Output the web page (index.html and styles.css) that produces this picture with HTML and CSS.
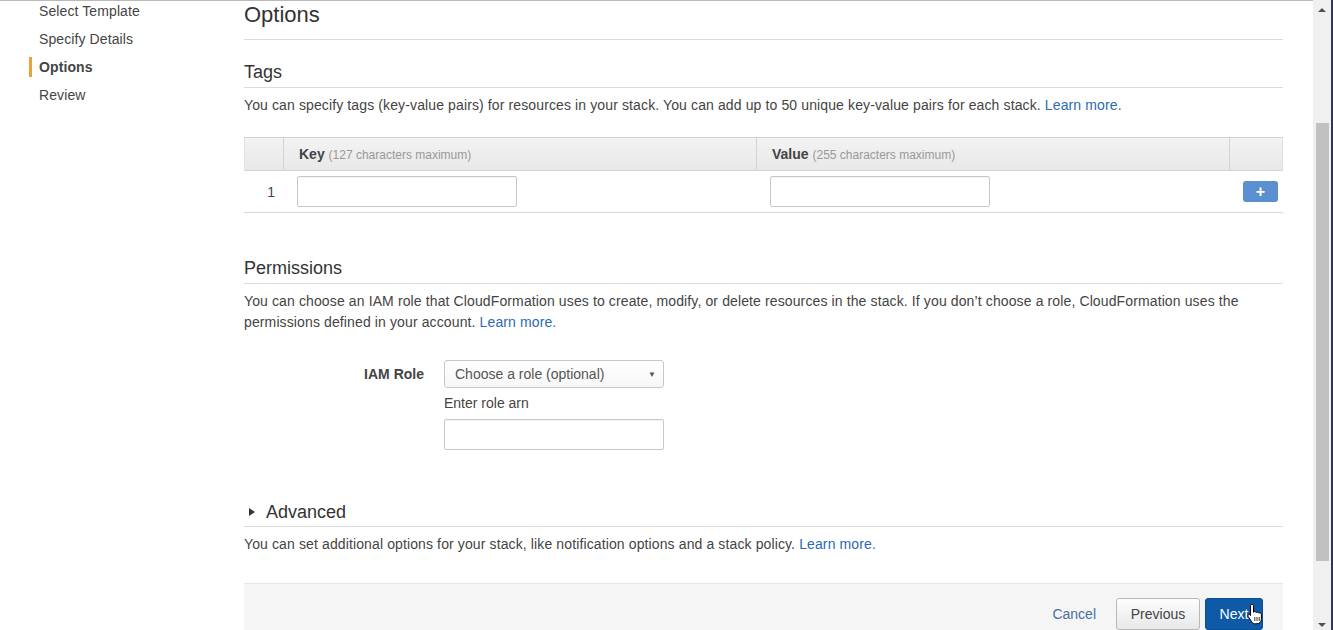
FILE: index.html
```html
<!DOCTYPE html>
<html>
<head>
<meta charset="utf-8">
<link rel="stylesheet" href="styles.css">
</head>
<body>
<div class="window">
  <div class="page">
    <nav class="steps">
      <div class="step">Select Template</div>
      <div class="step">Specify Details</div>
      <div class="step active">Options</div>
      <div class="step">Review</div>
    </nav>
    <main class="main">
      <h1 class="title">Options</h1>

      <h2 class="section">Tags</h2>
      <p class="desc">You can specify tags (key-value pairs) for resources in your stack. You can add up to 50 unique key-value pairs for each stack. <a class="link">Learn more.</a></p>

      <div class="tags">
        <div class="thead">
          <div class="th idx"></div>
          <div class="th col"><b>Key</b> <span class="hint">(127 characters maximum)</span></div>
          <div class="th col"><b>Value</b> <span class="hint">(255 characters maximum)</span></div>
          <div class="th act"></div>
        </div>
        <div class="trow">
          <div class="td idx">1</div>
          <div class="td col"><div class="input"></div></div>
          <div class="td col"><div class="input"></div></div>
          <div class="td act"><div class="plus">+</div></div>
        </div>
      </div>

      <h2 class="section perm">Permissions</h2>
      <p class="desc">You can choose an IAM role that CloudFormation uses to create, modify, or delete resources in the stack. If you don’t choose a role, CloudFormation uses the permissions defined in your account. <a class="link">Learn more.</a></p>

      <div class="roleform">
        <label class="rlabel">IAM Role</label>
        <div class="rfields">
          <div class="select"><span>Choose a role (optional)</span><span class="caret">▼</span></div>
          <div class="arnlabel">Enter role arn</div>
          <div class="input arn"></div>
        </div>
      </div>

      <h2 class="section adv"><span class="tri"></span>Advanced</h2>
      <p class="desc">You can set additional options for your stack, like notification options and a stack policy. <a class="link">Learn more.</a></p>

      <div class="footer">
        <a class="cancel">Cancel</a>
        <button class="btn prev">Previous</button>
        <div class="nextwrap">
          <button class="btn next">Next</button>
          <svg class="cursor" width="16" height="22" viewBox="0 0 16 22">
            <path d="M5 1.5c0.9 0 1.5 0.6 1.5 1.5v6.2c0.3-0.4 0.8-0.6 1.3-0.6 0.7 0 1.2 0.4 1.4 1 0.3-0.3 0.7-0.5 1.2-0.5 0.7 0 1.2 0.4 1.4 1 0.3-0.2 0.6-0.3 1-0.3 0.9 0 1.6 0.7 1.6 1.6v4.8c0 2.6-1.8 4.6-4.4 4.6H8.3c-1.5 0-2.7-0.7-3.5-1.9L1.2 13.6c-0.4-0.7-0.2-1.5 0.4-1.9 0.6-0.4 1.4-0.3 1.9 0.3L3.5 12.5V3c0-0.9 0.6-1.5 1.5-1.5z" fill="#fff" stroke="#000" stroke-width="1"/>
            <path d="M7.8 14v4M10 14v4M12.2 14v4" stroke="#000" stroke-width="0.8"/>
          </svg>
        </div>
      </div>
    </main>
    <div class="rspace"></div>
  </div>
  <div class="scrollbar">
    <div class="track">
      <div class="arrow up"></div>
      <div class="thumb"></div>
      <div class="arrow down"></div>
    </div>
    <div class="edge"></div>
  </div>
</div>
</body>
</html>
```

FILE: styles.css
```css
html, body {
  margin: 0;
  padding: 0;
  height: 630px;
  overflow: hidden;
  background: #fff;
}
body {
  font-family: "Liberation Sans", Arial, sans-serif;
  font-size: 14px;
  color: #444;
}
.window {
  display: flex;
  height: 630px;
}
.page {
  flex: 1;
  display: flex;
  border-top: 1px solid #b9b9b9;
  min-width: 0;
}
.steps {
  width: 215px;
  padding-left: 29px;
  flex: none;
}
.step {
  line-height: 20px;
  height: 20px;
  margin-bottom: 8px;
  padding-left: 7px;
  border-left: 3px solid transparent;
  color: #444;
  letter-spacing: 0.1px;
}
.step.active {
  border-left-color: #e8a33d;
  font-weight: bold;
}
.main {
  width: 1039px;
  flex: none;
}
.rspace {
  flex: 1;
}
.title {
  margin: 0;
  font-size: 22px;
  font-weight: normal;
  color: #333;
  line-height: 27px;
  padding-bottom: 11px;
  border-bottom: 1px solid #ddd;
}
.section {
  margin: 20px 0 0;
  font-size: 18px;
  font-weight: normal;
  color: #333;
  line-height: 24px;
  padding-bottom: 3px;
  border-bottom: 1px solid #ddd;
}
.desc {
  margin: 7px 0 0;
  line-height: 21px;
  letter-spacing: 0.12px;
}
.link {
  color: #2b6bb2;
}
.tags {
  margin-top: 21px;
}
.thead, .trow {
  display: grid;
  grid-template-columns: 39px 473px 473px 54px;
}
.thead {
  height: 32px;
  background: linear-gradient(#f3f3f3, #e8e8e8);
  border-top: 1px solid #d3d3d3;
  border-bottom: 1px solid #d3d3d3;
}
.th {
  line-height: 32px;
  padding-left: 15px;
  border-left: 1px solid #d3d3d3;
  color: #444;
}
.th.idx {
  border-left: 1px solid #e0e0e0;
}
.th.act {
  border-right: 1px solid #e0e0e0;
}
.hint {
  font-size: 12px;
  color: #999;
}
.trow {
  height: 41px;
  border-bottom: 1px solid #d6d6d6;
  align-items: center;
}
.td.idx {
  text-align: right;
  padding-right: 8px;
}
.td.col {
  padding-left: 14px;
}
.input {
  width: 218px;
  height: 29px;
  border: 1px solid #c8c8c8;
  border-radius: 2px;
  background: #fff;
  box-shadow: inset 0 1px 1px rgba(0,0,0,0.05);
}
.td.act {
  display: flex;
  justify-content: flex-end;
  padding-right: 5px;
}
.plus {
  width: 35px;
  height: 21px;
  background: #5a8fd0;
  border-radius: 3px;
  color: #fff;
  font-weight: bold;
  font-size: 16px;
  line-height: 21px;
  text-align: center;
}
.section.perm {
  margin-top: 43px;
}
.roleform {
  display: grid;
  grid-template-columns: 180px 220px;
  column-gap: 20px;
  margin-top: 27px;
}
.rlabel {
  text-align: right;
  font-weight: bold;
  line-height: 28px;
}
.select {
  height: 26px;
  border: 1px solid #c8c8c8;
  border-radius: 3px;
  background: linear-gradient(#fff, #f7f7f7);
  display: flex;
  justify-content: space-between;
  align-items: center;
  padding: 0 7px 0 10px;
  color: #555;
}
.caret {
  font-size: 8px;
  color: #555;
}
.arnlabel {
  line-height: 21px;
  margin-top: 5px;
}
.input.arn {
  width: 218px;
  height: 29px;
  margin-top: 5px;
}
.section.adv {
  margin-top: 50px;
  padding-bottom: 2px;
  display: flex;
  align-items: center;
}
.tri {
  width: 0;
  height: 0;
  border-top: 4px solid transparent;
  border-bottom: 4px solid transparent;
  border-left: 6px solid #333;
  margin: 0 11px 0 5px;
}
.footer {
  margin-top: 28px;
  background: #f5f5f5;
  border-top: 1px solid #e6e6e6;
  display: flex;
  justify-content: flex-end;
  padding: 14px 20px 0 0;
  height: 60px;
  align-items: flex-start;
}
.cancel {
  color: #44709e;
  line-height: 32px;
  margin-right: 20px;
}
.btn {
  font-family: "Liberation Sans", Arial, sans-serif;
  font-size: 14px;
  height: 32px;
  border-radius: 3px;
  padding: 0;
}
.prev {
  width: 84px;
  background: linear-gradient(#fdfdfd, #e8e8e8);
  border: 1px solid #b8b8b8;
  color: #444;
  margin-right: 5px;
}
.nextwrap {
  position: relative;
}
.next {
  width: 58px;
  background: #0e5aa7;
  border: 1px solid #0a4d92;
  color: #fff;
}
.cursor {
  position: absolute;
  left: 42px;
  top: 5px;
}
.scrollbar {
  width: 20px;
  flex: none;
  display: flex;
}
.track {
  width: 18px;
  background: #f0f0f0;
  display: flex;
  flex-direction: column;
  align-items: center;
}
.thumb {
  width: 13px;
  margin-top: 111px;
  height: 438px;
  background: #c1c1c1;
}
.arrow {
  width: 0;
  height: 0;
  border-left: 4px solid transparent;
  border-right: 4px solid transparent;
}
.arrow.up {
  border-bottom: 4px solid #505050;
  margin-top: 8px;
}
.arrow.down {
  border-top: 4px solid #505050;
  margin-top: auto;
  margin-bottom: 3px;
}
.edge {
  width: 2px;
  background: #333652;
}
```
